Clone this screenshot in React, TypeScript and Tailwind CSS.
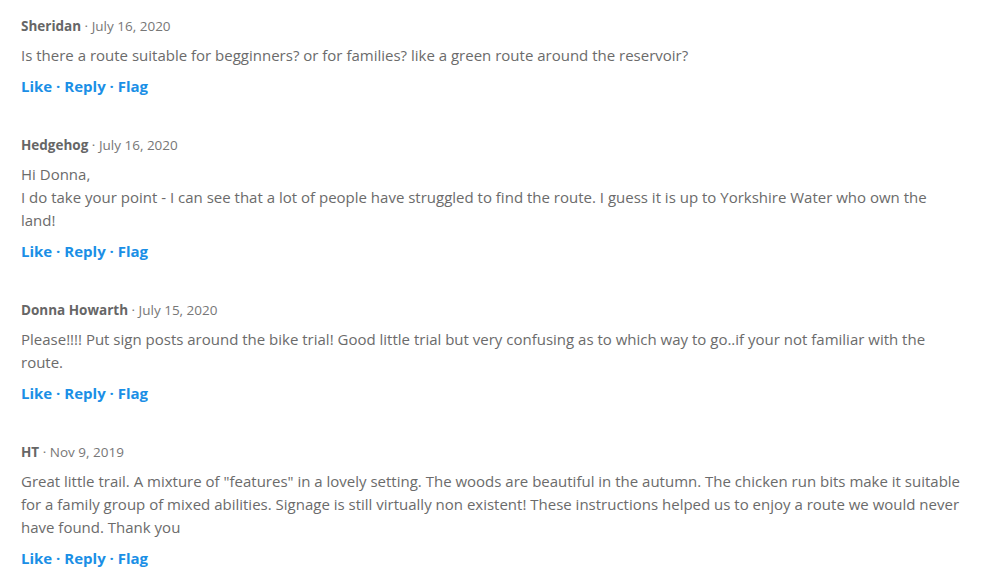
const comments = [
  {
    author: "Sheridan",
    date: "July 16, 2020",
    body: ["Is there a route suitable for begginners? or for families? like a green route around the reservoir?"],
  },
  {
    author: "Hedgehog",
    date: "July 16, 2020",
    body: [
      "Hi Donna,",
      "I do take your point - I can see that a lot of people have struggled to find the route. I guess it is up to Yorkshire Water who own the land!",
    ],
  },
  {
    author: "Donna Howarth",
    date: "July 15, 2020",
    body: [
      "Please!!!! Put sign posts around the bike trial! Good little trial but very confusing as to which way to go..if your not familiar with the route.",
    ],
  },
  {
    author: "HT",
    date: "Nov 9, 2019",
    body: [
      'Great little trail. A mixture of "features" in a lovely setting. The woods are beautiful in the autumn. The chicken run bits make it suitable for a family group of mixed abilities. Signage is still virtually non existent! These instructions helped us to enjoy a route we would never have found. Thank you',
    ],
  },
];

function Comment({ author, date, body }: { author: string; date: string; body: string[] }) {
  return (
    <li className="flex flex-col">
      <div className="text-[13.5px] leading-[20px] text-[#777]">
        <span className="font-bold text-[#666]">{author}</span> · {date}
      </div>
      <div className="mt-2 text-[15px] leading-[23px] text-[#6b6b6b]">
        {body.map((line, i) => (
          <p key={i}>{line}</p>
        ))}
      </div>
      <div className="mt-2 text-[15px] font-bold leading-[23px] text-[#1b8fe6]">
        <a>Like</a> · <a>Reply</a> · <a>Flag</a>
      </div>
    </li>
  );
}

export default function App() {
  return (
    <div className="min-h-screen bg-white font-['Open_Sans',sans-serif]">
      <ul className="flex w-[965px] flex-col gap-[37px] pl-[21px] pt-4">
        {comments.map((c) => (
          <Comment key={c.author} {...c} />
        ))}
      </ul>
    </div>
  );
}
